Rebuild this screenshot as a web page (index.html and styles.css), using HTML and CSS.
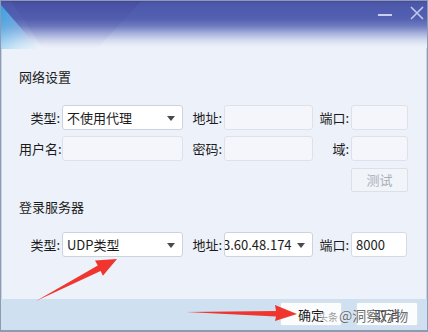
FILE: index.html
```html
<!DOCTYPE html>
<html lang="zh-CN">
<head>
<meta charset="utf-8">
<title>设置</title>
<link rel="stylesheet" href="styles.css">
</head>
<body>
<div class="window">
  <div class="titlebar">
    <svg class="decor" width="160" height="48" viewBox="0 0 160 48">
      <defs>
        <linearGradient id="cy" x1="0" y1="0" x2="1" y2="1">
          <stop offset="0" stop-color="#2fa4e6"/>
          <stop offset="1" stop-color="#dff0fb" stop-opacity="0.2"/>
        </linearGradient>
        <linearGradient id="pu" x1="0" y1="0" x2="0" y2="1">
          <stop offset="0" stop-color="#3d3f98" stop-opacity="0.35"/>
          <stop offset="1" stop-color="#6c72b8" stop-opacity="0"/>
        </linearGradient>
      </defs>
      <polygon points="10,0 140,0 96,48 42,48" fill="url(#pu)"/>
      <polygon points="0,4 0,48 38,48" fill="url(#cy)"/>
    </svg>
    <div class="controls">
      <span class="min"></span>
      <svg class="close" width="16" height="16" viewBox="0 0 16 16">
        <path d="M2 2 L14 14 M14 2 L2 14" stroke="#c3c9ee" stroke-width="1.6" fill="none"/>
      </svg>
    </div>
  </div>

  <div class="content">
    <div class="section-title">网络设置</div>
    <div class="form proxy">
      <span class="lbl">类型:</span>
      <div class="field select">不使用代理<i class="caret"></i></div>
      <span class="lbl">地址:</span>
      <div class="field dim"></div>
      <span class="lbl">端口:</span>
      <div class="field dim"></div>

      <span class="lbl">用户名:</span>
      <div class="field dim"></div>
      <span class="lbl">密码:</span>
      <div class="field dim"></div>
      <span class="lbl">域:</span>
      <div class="field dim"></div>

      <div class="test">测试</div>
    </div>

    <div class="section-title second">登录服务器</div>
    <div class="form server">
      <span class="lbl">类型:</span>
      <div class="field select">UDP类型<i class="caret"></i></div>
      <span class="lbl">地址:</span>
      <div class="field select addr"><span class="clip"><span class="val">3.60.48.174</span></span><i class="caret"></i></div>
      <span class="lbl">端口:</span>
      <div class="field port">8000</div>
    </div>
  </div>

  <div class="footer">
    <button class="btn">确定</button>
    <button class="btn">取消</button>
  </div>

  <div class="watermark"><span class="wm-a">头条</span>@洞察万物</div>

  <svg class="arrows" width="428" height="332" viewBox="0 0 428 332">
    <polygon points="36,301 100.6,270.9 102.9,275.8 117,259 95,260.6 97.8,265.5" fill="#f0352e"/>
    <polygon points="186,312 276,311 275,305 297,314 275,321 276,316.5" fill="#f0352e"/>
  </svg>
</div>
</body>
</html>
```

FILE: styles.css
```css
* { box-sizing: border-box; }

html, body {
  margin: 0;
  padding: 0;
}

body {
  width: 428px;
  height: 332px;
  overflow: hidden;
  font-family: "Noto Sans CJK SC", "Noto Sans", sans-serif;
  font-size: 13px;
  color: #1b1b1b;
}

.window {
  position: relative;
  width: 428px;
  height: 332px;
  display: flex;
  flex-direction: column;
  background: #edf1f9;
  border: 1px solid #8d9ab2;
  border-bottom-width: 2px;
  box-shadow: inset 1px 0 0 #c9d3e4, inset -1px 0 0 #c9d3e4;
}

.titlebar {
  position: relative;
  height: 47px;
  flex: none;
  background: linear-gradient(to bottom,
    #444a9c 0px,
    #4c57a9 2px,
    #5461b2 18px,
    #6e7bbf 25px,
    #a3aedb 32px,
    #d2daef 39px,
    #e7ecf7 44px,
    #edf1f9 47px);
}

.decor {
  position: absolute;
  left: 0;
  top: 0;
}

.controls {
  position: absolute;
  right: 2px;
  top: 4px;
  display: flex;
  align-items: center;
  gap: 17px;
}

.min {
  display: block;
  width: 14px;
  height: 2px;
  background: #c9cff0;
  margin-top: 4px;
}

.close {
  display: block;
}

.content {
  flex: 1;
  padding: 20px 0 0 18px;
}

.section-title {
  height: 18px;
  line-height: 18px;
}

.section-title.second {
  margin-top: 6px;
}

.form {
  display: grid;
  grid-template-columns: 43px 121px 41px 89px 38px 57px;
  align-items: center;
}

.proxy {
  margin-top: 19px;
  grid-auto-rows: 25px;
  row-gap: 6px;
}

.server {
  margin-top: 16px;
  grid-auto-rows: 25px;
}

.lbl {
  text-align: right;
  padding-right: 2px;
  white-space: nowrap;
  line-height: 25px;
}

.field {
  position: relative;
  height: 25px;
  line-height: 23px;
  border: 1px solid #d4dae4;
  border-radius: 3px;
  background: #ffffff;
  padding-left: 4px;
  white-space: nowrap;
  overflow: hidden;
}

.field.dim {
  background: #f4f6fb;
  border-color: #dde2ea;
}

.select {
  border-color: #cdd3de;
}

.caret {
  position: absolute;
  right: 7px;
  top: 10px;
  width: 0;
  height: 0;
  border-left: 4.5px solid transparent;
  border-right: 4.5px solid transparent;
  border-top: 5px solid #4a4a4a;
}

.addr {
  padding-left: 0;
}

.clip {
  display: block;
  width: 72px;
  overflow: hidden;
}

.val {
  display: inline-block;
  margin-left: -2px;
}

.port {
  width: 56px;
}

.test {
  grid-column: 6;
  height: 24px;
  line-height: 22px;
  text-align: center;
  color: #a9afba;
  background: #f1f4f9;
  border: 1px solid #dce1e9;
  border-radius: 2px;
}

.footer {
  flex: none;
  height: 31px;
  background: #cfe0f0;
  display: flex;
  justify-content: flex-end;
  align-items: flex-start;
  gap: 14px;
  padding: 3px 9px 0 0;
}

.btn {
  width: 62px;
  height: 24px;
  font: inherit;
  color: #1b1b1b;
  background: #fbfcfe;
  border: 1px solid #d9e1ea;
  border-radius: 2px;
  padding: 0;
}

.watermark {
  position: absolute;
  left: 317px;
  top: 304px;
  font-size: 14px;
  line-height: 20px;
  color: rgba(60, 60, 60, 0.75);
  text-shadow: 0 0 2px #ffffff;
  white-space: nowrap;
}

.wm-a {
  font-size: 10px;
  margin-right: 1px;
  color: rgba(120, 120, 120, 0.75);
}

.arrows {
  position: absolute;
  left: -1px;
  top: -1px;
  pointer-events: none;
}
```
